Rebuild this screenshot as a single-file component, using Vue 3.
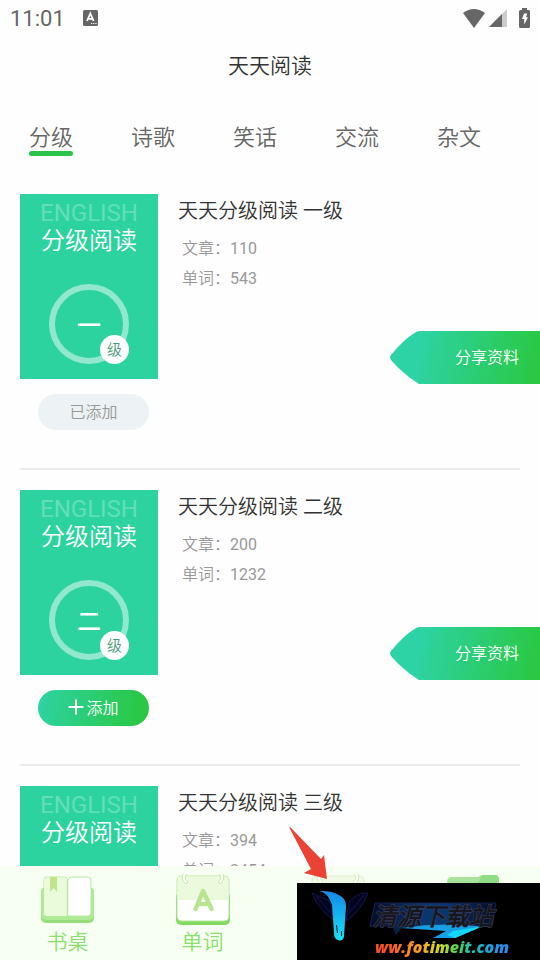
<template>
    <div class="page">
        <header class="status">
            <span class="status__time">11:01</span>
            <svg class="status__app" viewBox="0 0 15 16">
                <rect width="15" height="16" rx="1.5" fill="#666" />
                <path d="M4 11 L7.300 3.500 L10.600 11 M5.200 8.800 H9.400" fill="none" stroke="#fff" stroke-width="1.800" />
                <path d="M8 13.500h1.200M10.200 13.500h1.200M12.400 13.500h1.200" stroke="#fff" stroke-width="1.200" />
            </svg>
            <div class="status__icons">
                <svg class="status__wifi" viewBox="0 0 22 19">
                    <path d="M0 4 Q11 -4 22 4 L11 19 Z" fill="#666" />
                </svg>
                <svg class="status__signal" viewBox="0 0 18 18">
                    <path d="M18 0 V18 H0 Z" fill="#ccc" />
                    <path d="M13 5 V18 H0 Z" fill="#666" />
                </svg>
                <svg class="status__battery" viewBox="0 0 11 20">
                    <path d="M3 0h5v2h1.500q1.500 0 1.500 1.500v15q0 1.500-1.500 1.500h-8Q0 20 0 18.500v-15Q0 2 1.500 2H3z" fill="#666" />
                    <path d="M5 5.500h3.200L7 9.200h2L5.200 16.500V11H3z" fill="#fff" />
                </svg>
            </div>
        </header>

        <h1 class="title">天天阅读</h1>

        <nav class="tabs">
            <button v-for="(tab, index) in tabs" :key="tab" class="tabs__item"
                :class="{ 'tabs__item--active': index === activeTab }" @click="activeTab = index">
                {{ tab }}
            </button>
        </nav>

        <main class="list">
            <article v-for="book in books" :key="book.level" class="book">
                <div class="book__left">
                    <div class="cover">
                        <span class="cover__en">ENGLISH</span>
                        <span class="cover__name">分级阅读</span>
                        <div class="cover__circle">
                            {{ book.level }}
                            <span class="cover__badge">级</span>
                        </div>
                    </div>
                    <button class="add" :class="{ 'add--done': book.added }" @click="book.added = !book.added">
                        <svg v-if="!book.added" class="add__plus" viewBox="0 0 16 16">
                            <path d="M8 0.500V15.500M0.500 8H15.500" stroke="#fff" stroke-width="2" />
                        </svg>
                        {{ book.added ? '已添加' : '添加' }}
                    </button>
                </div>
                <div class="book__info">
                    <h2 class="book__title">天天分级阅读 {{ book.level }}级</h2>
                    <p class="book__count">文章：{{ book.articles }}</p>
                    <p class="book__count">单词：{{ book.words }}</p>
                    <button class="share">分享资料</button>
                </div>
            </article>
        </main>

        <nav class="bottom">
            <button class="bottom__item">
                <svg class="bottom__icon" viewBox="0 0 56 52">
                    <rect x="1" y="13" width="53" height="36" rx="5" fill="#97dc7c" />
                    <rect x="1" y="13" width="53" height="33" rx="5" fill="#aeeb96" />
                    <path d="M7 3h17q3 0 4 3q1-3 4-3h16q3 0 3 3v33q0 3-3 3H7q-3 0-3-3V6q0-3 3-3z" fill="#fff" stroke="#b4ea9c" />
                    <path d="M7 3.500h17q3 0 3.500 3V42H7q-3 0-3-3V6.500q0-3 3-3z" fill="#eafbdc" />
                    <path d="M27.500 6v37" stroke="#b4ea9c" stroke-width="1.500" />
                    <path d="M10 3h7v15l-3.500-4L10 18z" fill="#bfe48b" />
                </svg>
                <span>书桌</span>
            </button>
            <button class="bottom__item">
                <svg class="bottom__icon" viewBox="0 0 56 52">
                    <rect x="1" y="18" width="54" height="33" rx="5" fill="#82da5e" />
                    <path d="M6 2h43q5 0 5 5v35q0 5-5 5H7q-5 0-5-5V7q0-5 4-5z" fill="#fff" stroke="#b9e9a0" />
                    <path d="M7 2.500h41q5 0 5 5V26H3V7.500q0-5 4-5z" fill="#ebf9dc" />
                    <path d="M10 0q-3 4 1 8M45 8q4-4 1-8" fill="none" stroke="#bce9a3" stroke-width="3.500" stroke-linecap="round" />
                    <path d="M10 0q-3 4 1 8M45 8q4-4 1-8" fill="none" stroke="#fff" stroke-width="2" stroke-linecap="round" />
                    <path d="M20.500 35 L28 17 L36.500 35 M23 30H34" fill="none" stroke="#b9e592" stroke-width="4.500" stroke-linecap="round" stroke-linejoin="round" />
                </svg>
                <span>单词</span>
            </button>
            <button class="bottom__item" aria-label="资料">
                <svg class="bottom__icon" viewBox="0 0 56 52">
                    <path d="M7 2h42q5 0 5 5v40H2V7q0-5 5-5z" fill="#f0f9e4" stroke="#d8eecb" />
                    <path d="M10 0q-3 4 1 8M45 8q4-4 1-8" fill="none" stroke="#cfebbf" stroke-width="3.500" stroke-linecap="round" />
                    <path d="M10 0q-3 4 1 8M45 8q4-4 1-8" fill="none" stroke="#fff" stroke-width="2" stroke-linecap="round" />
                </svg>
            </button>
            <button class="bottom__item" aria-label="我的">
                <svg class="bottom__icon" viewBox="0 0 56 52">
                    <path d="M2 8q0-5 5-5h26l4-2h12q5 0 5 5v40H2z" fill="#a9e39a" />
                    <path d="M32 10l5-8q1-1 3-1h10q4 0 4 5v7z" fill="#8fdc84" />
                </svg>
            </button>
        </nav>

        <svg class="arrow" viewBox="0 0 40 54">
            <path d="M0 0 Q2 0 4 3 L32 32 L35 28 L38 52 L15 46 L22 42 Z" fill="#ea4335" />
        </svg>

        <aside class="banner">
            <svg class="banner__art" viewBox="0 0 243 77">
                <defs>
                    <linearGradient id="wing" x1="0" y1="0" x2="0" y2="1">
                        <stop offset="0" stop-color="#1787e6" />
                        <stop offset="1" stop-color="#15e4f5" />
                    </linearGradient>
                    <linearGradient id="glow" x1="0" y1="0" x2="1" y2="0">
                        <stop offset="0" stop-color="#050b22" />
                        <stop offset="0.4" stop-color="#0a3670" />
                        <stop offset="0.6" stop-color="#0a3670" />
                        <stop offset="1" stop-color="#050920" />
                    </linearGradient>
                </defs>
                <path d="M15 10 L33 18 L37 37 Q23 29 15 10zM19 13L35 31M71 10 Q61 9 52 19 L49 38 Q64 28 71 10zM67 12L51 31" fill="#03051f" stroke="#11184f" />
                <path d="M23 8 Q36 7 45 14 Q49 17 49 24 L48 38 L47 54 Q45 59 41 57 Q37 56 37 50 L35 22 Q31 10 23 8z" fill="url(#wing)" />
                <path d="M39.500 42l1 8M44.500 48v5" fill="none" stroke="#03182a" />
                <path d="M78 20H199L195 43H106L99 51L96 43H73z" fill="url(#glow)" stroke="#18204a" />
                <path d="M104 45 Q145 39 185 43.500 L158 55 H136 L149 48z" fill="#169fe5" />
                <path d="M156 48L185 43.500L158 55L150 52z" fill="#13d9f6" />
            </svg>
            <div class="banner__text">
                <strong class="banner__name">清源下载站</strong>
                <span class="banner__url">ww.fotimeit.com</span>
            </div>
        </aside>
    </div>
</template>

<script setup>
import { ref } from 'vue'

const tabs = ['分级', '诗歌', '笑话', '交流', '杂文']
const activeTab = ref(0)

const books = ref([
    { level: '一', articles: 110, words: 543, added: true },
    { level: '二', articles: 200, words: 1232, added: false },
    { level: '三', articles: 394, words: 2454, added: false }
])
</script>

<style>
body {
    margin: 0;
    background: #fefefe;
}
</style>

<style scoped>
.page {
    position: relative;
    display: flex;
    flex-direction: column;
    height: 100vh;
    overflow: hidden;
    font-family: Roboto, "Noto Sans CJK SC DemiLight", "Noto Sans CJK SC", sans-serif;
    color: #333;
}

button {
    padding: 0;
    border: none;
    background: none;
    font-family: inherit;
    cursor: pointer;
}

.status {
    display: flex;
    flex-shrink: 0;
    align-items: center;
    height: 36px;
    padding: 0 10px;
    color: #666;
}

.status__time {
    font-size: 22px;
    line-height: 36px;
    padding-top: 2px;
}

.status__app {
    width: 15px;
    height: 16px;
    margin-left: 18px;
}

.status__icons {
    display: flex;
    align-items: center;
    margin-left: auto;
}

.status__wifi {
    width: 22px;
    height: 19px;
}

.status__signal {
    width: 18px;
    height: 18px;
    margin: 0 12px 0 4px;
}

.status__battery {
    width: 11px;
    height: 20px;
}

.title {
    flex-shrink: 0;
    margin: 0;
    font-size: 21px;
    font-weight: 400;
    line-height: 60px;
    text-align: center;
}

.tabs {
    display: flex;
    flex-shrink: 0;
    gap: 58px;
    padding: 24px 29px 38px;
}

.tabs__item {
    position: relative;
    height: 36px;
    font-size: 22px;
    line-height: 36px;
    color: #666;
}

.tabs__item--active::after {
    content: "";
    position: absolute;
    bottom: 0;
    left: 0;
    width: 100%;
    height: 5px;
    border-radius: 3px;
    background: #2bc34b;
}

.list {
    flex: 1;
    min-height: 0;
    padding: 0 20px;
    overflow: hidden;
}

.book {
    display: flex;
    gap: 20px;
    margin-bottom: 20px;
    padding-bottom: 38px;
    border-bottom: 2px solid #e9ebeb;
}

.book__left {
    display: flex;
    flex-direction: column;
    width: 138px;
}

.cover {
    display: flex;
    flex-direction: column;
    align-items: center;
    height: 180px;
    padding-top: 5px;
    background: #2dd39f;
    color: #fff;
    font-size: 24px;
    line-height: 28px;
}

.cover__en {
    color: #62dfb7;
}

.cover__circle {
    position: relative;
    box-sizing: border-box;
    width: 80px;
    height: 80px;
    margin-top: 29px;
    border: 6px solid #92e8cd;
    border-radius: 50%;
    font-family: "Noto Sans CJK SC", sans-serif;
    font-weight: 500;
    line-height: 68px;
    text-align: center;
}

.cover__badge {
    position: absolute;
    right: -6px;
    bottom: -6px;
    width: 29px;
    height: 29px;
    border-radius: 50%;
    background: #fff;
    color: #4c9c7b;
    font-family: "Noto Sans CJK SC DemiLight", "Noto Sans CJK SC", sans-serif;
    font-size: 15px;
    font-weight: 400;
    line-height: 28px;
}

.add {
    display: flex;
    align-items: center;
    justify-content: center;
    gap: 2px;
    height: 36px;
    margin: 15px 9px 0 18px;
    padding-bottom: 2px;
    border-radius: 18px;
    background: linear-gradient(100deg, #2dd3a4, #2ac845 90%);
    color: #fff;
    font-size: 16px;
}

.add--done {
    background: #edf3f4;
    color: #999;
}

.add__plus {
    width: 16px;
    height: 16px;
}

.book__info {
    display: flex;
    flex: 1;
    flex-direction: column;
}

.book__title {
    margin: 0 0 6px;
    font-size: 20px;
    font-weight: 400;
    line-height: 34px;
}

.book__count {
    margin: 0 0 0 4px;
    font-size: 16px;
    line-height: 30px;
    color: #999;
}

.share {
    align-self: flex-end;
    width: 150px;
    height: 53px;
    margin: 37px -20px 0 0;
    padding: 0 0 4px 44px;
    background: linear-gradient(100deg, #2dd3a4 20%, #2ac845 95%);
    clip-path: path("M30 0H150V53H29Q13 43 1 29Q-1 26 1 24Q14 8 26 1Q28 0 30 0Z");
    color: #fff;
    font-size: 16px;
}

.bottom {
    display: flex;
    flex-shrink: 0;
    height: 94px;
    background: #f7fff2;
}

.bottom__item {
    display: flex;
    flex: 1;
    flex-direction: column;
    align-items: center;
    padding-top: 8px;
    color: #8be06d;
    font-size: 21px;
    line-height: 32px;
}

.bottom__icon {
    width: 56px;
    height: 52px;
}

.arrow {
    position: absolute;
    right: 211px;
    bottom: 79px;
    width: 40px;
    height: 54px;
}

.banner {
    position: absolute;
    right: 0;
    bottom: 0;
    width: 243px;
    height: 77px;
    background: #000;
}

.banner__art {
    position: absolute;
    inset: 0;
}

.banner__text {
    position: relative;
    display: flex;
    flex-direction: column;
    padding: 16px 0 0 76px;
}

.banner__name {
    color: #15171c;
    font-size: 24px;
    font-style: italic;
    font-weight: 700;
    line-height: 36px;
    -webkit-text-stroke: 1px #3b4268;
    paint-order: stroke fill;
}

.banner__url {
    align-self: flex-start;
    padding: 0 2px;
    background: linear-gradient(90deg, #f4502b 10%, #fb9a25 32%, #d6dc22 48%, #58cf4c 60%, #1fc6a8 70%, #2592ec 90%);
    background-clip: text;
    color: transparent;
    font-family: "Open Sans", sans-serif;
    font-size: 16px;
    font-style: italic;
    font-weight: 800;
    line-height: 25px;
}
</style>
